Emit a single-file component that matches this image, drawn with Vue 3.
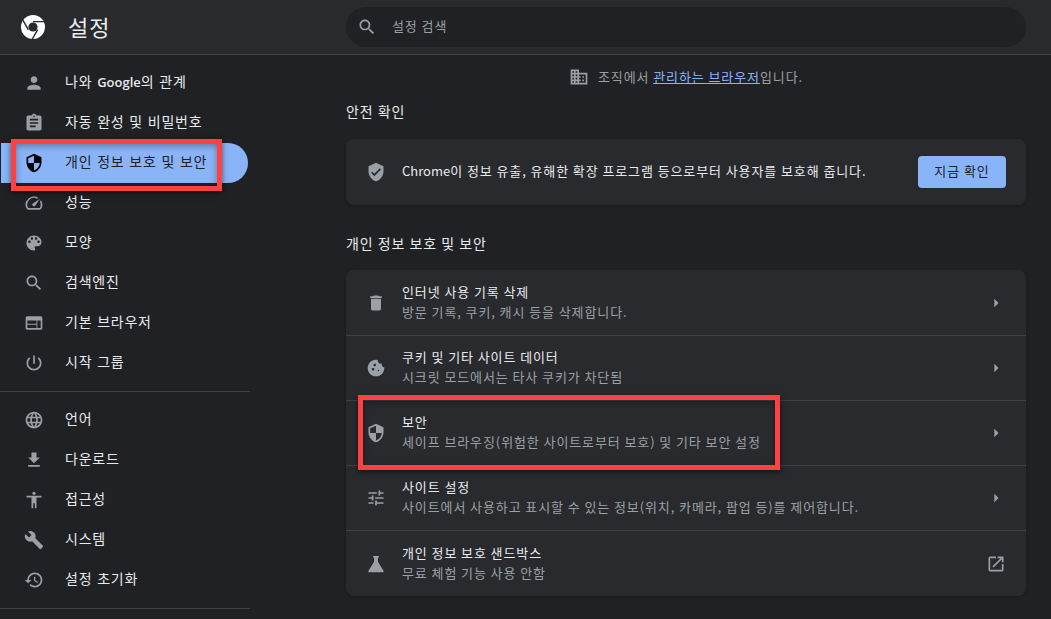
<template>
  <div class="page">
    <header class="topbar">
      <div class="brand">
        <svg class="logo" viewBox="0 0 24 24">
          <circle cx="12" cy="12" r="12" fill="#fff" />
          <circle cx="12" cy="12" r="4.6" fill="#292a2d" />
          <path d="M12 6.6H23.4M7.3 14.7L1.7 4.8M16.7 14.7l-5.6 9.7" stroke="#292a2d" stroke-width="1.4" fill="none" />
        </svg>
        <h1 class="brand-title">설정</h1>
      </div>
      <div class="search">
        <svg class="icon" viewBox="0 0 24 24"><path :d="icons.search" /></svg>
        <span class="search-text">설정 검색</span>
      </div>
    </header>

    <div class="body">
      <nav class="sidebar">
        <div v-for="(group, i) in navGroups" :key="i" class="nav-group">
          <a v-for="item in group" :key="item.label" class="nav-item" :class="{ active: item.active }">
            <svg class="icon" viewBox="0 0 24 24"><path :d="icons[item.icon]" /></svg>
            <span v-if="item.label === 'google'">나와 <b class="latin">Google</b>의 관계</span>
            <span v-else>{{ item.label }}</span>
          </a>
        </div>
      </nav>

      <main class="content">
        <div class="managed">
          <svg class="icon" viewBox="0 0 24 24"><path :d="icons.domain" /></svg>
          <span>조직에서 <a class="link">관리하는 브라우저</a>입니다.</span>
        </div>

        <h2 class="section-title first">안전 확인</h2>
        <section class="card check-card">
          <svg class="icon" viewBox="0 0 24 24"><path :d="icons.verified" /></svg>
          <span class="check-text"><span class="plain">Chrome</span>이 정보 유출, 유해한 확장 프로그램 등으로부터 사용자를 보호해 줍니다.</span>
          <button class="check-btn">지금 확인</button>
        </section>

        <h2 class="section-title">개인 정보 보호 및 보안</h2>
        <section class="card">
          <div v-for="row in rows" :key="row.title" class="row">
            <svg class="icon" viewBox="0 0 24 24"><path :d="icons[row.icon]" /></svg>
            <div class="row-text">
              <div class="row-title">{{ row.title }}</div>
              <div class="row-sub">{{ row.sub }}</div>
            </div>
            <svg v-if="row.external" class="icon trail" viewBox="0 0 24 24"><path :d="icons.external" /></svg>
            <svg v-else class="icon trail" viewBox="0 0 24 24"><path d="M10 7l5 5-5 5z" /></svg>
          </div>
        </section>
      </main>
    </div>

    <div class="callout callout-nav"></div>
    <div class="callout callout-row"></div>
  </div>
</template>

<script setup>
const icons = {
  person: 'M12 12c2.21 0 4-1.79 4-4s-1.79-4-4-4-4 1.79-4 4 1.79 4 4 4zm0 2c-2.67 0-8 1.34-8 4v2h16v-2c0-2.66-5.33-4-8-4z',
  assignment: 'M19 3h-4.18C14.4 1.84 13.3 1 12 1c-1.3 0-2.4.84-2.82 2H5c-1.1 0-2 .9-2 2v14c0 1.1.9 2 2 2h14c1.1 0 2-.9 2-2V5c0-1.1-.9-2-2-2zm-7 0c.55 0 1 .45 1 1s-.45 1-1 1-1-.45-1-1 .45-1 1-1zm2 14H7v-2h7v2zm3-4H7v-2h10v2zm0-4H7V7h10v2z',
  shield: 'M12 1L3 5v6c0 5.55 3.84 10.74 9 12 5.16-1.26 9-6.45 9-12V5l-9-4zm0 10.99h7c-.53 4.12-3.28 7.79-7 8.94V12H5V6.3l7-3.11v8.8z',
  speed: 'M20.38 8.57l-1.23 1.85a8 8 0 0 1-.22 7.58H5.07A8 8 0 0 1 15.58 6.85l1.85-1.23A10 10 0 0 0 3.35 19a2 2 0 0 0 1.72 1h13.85a2 2 0 0 0 1.74-1 10 10 0 0 0-.27-10.44zm-9.79 6.84a2 2 0 0 0 2.83 0l5.66-8.49-8.49 5.66a2 2 0 0 0 0 2.83z',
  palette: 'M12 3c-4.97 0-9 4.03-9 9s4.03 9 9 9c.83 0 1.5-.67 1.5-1.5 0-.39-.15-.74-.39-1.01-.23-.26-.38-.61-.38-.99 0-.83.67-1.5 1.5-1.5H16c2.76 0 5-2.24 5-5 0-4.42-4.03-8-9-8zm-5.5 9c-.83 0-1.5-.67-1.5-1.5S5.67 9 6.5 9 8 9.67 8 10.5 7.33 12 6.5 12zm3-4C8.67 8 8 7.33 8 6.5S8.67 5 9.5 5s1.5.67 1.5 1.5S10.33 8 9.5 8zm5 0c-.83 0-1.5-.67-1.5-1.5S13.67 5 14.5 5s1.5.67 1.5 1.5S15.33 8 14.5 8zm3 4c-.83 0-1.5-.67-1.5-1.5S16.67 9 17.5 9s1.5.67 1.5 1.5-.67 1.5-1.5 1.5z',
  search: 'M15.5 14h-.79l-.28-.27C15.41 12.59 16 11.11 16 9.5 16 5.91 13.09 3 9.5 3S3 5.91 3 9.5 5.91 16 9.5 16c1.61 0 3.09-.59 4.23-1.57l.27.28v.79l5 4.99L20.49 19l-4.99-5zm-6 0C7.01 14 5 11.99 5 9.5S7.01 5 9.5 5 14 7.01 14 9.5 11.99 14 9.5 14z',
  web: 'M20 4H4c-1.1 0-1.99.9-1.99 2L2 18c0 1.1.9 2 2 2h16c1.1 0 2-.9 2-2V6c0-1.1-.9-2-2-2zm-5 14H4v-4h11v4zm0-5H4V9h11v4zm5 5h-4V9h4v9z',
  power: 'M13 3h-2v10h2V3zm4.83 2.17l-1.42 1.42C17.99 7.86 19 9.81 19 12c0 3.87-3.13 7-7 7s-7-3.13-7-7c0-2.19 1.01-4.14 2.58-5.42L6.17 5.17C4.23 6.82 3 9.26 3 12c0 4.97 4.03 9 9 9s9-4.03 9-9c0-2.74-1.23-5.18-3.17-6.83z',
  language: 'M11.99 2C6.47 2 2 6.48 2 12s4.47 10 9.99 10C17.52 22 22 17.52 22 12S17.52 2 11.99 2zm6.93 6h-2.95c-.32-1.25-.78-2.45-1.38-3.56 1.84.63 3.37 1.91 4.33 3.56zM12 4.04c.83 1.2 1.48 2.53 1.91 3.96h-3.82c.43-1.43 1.08-2.76 1.91-3.96zM4.26 14C4.1 13.36 4 12.69 4 12s.1-1.36.26-2h3.38c-.08.66-.14 1.32-.14 2 0 .68.06 1.34.14 2H4.26zm.82 2h2.95c.32 1.25.78 2.45 1.38 3.56-1.84-.63-3.37-1.9-4.33-3.56zm2.95-8H5.08c.96-1.66 2.49-2.93 4.33-3.56C8.81 5.55 8.35 6.75 8.03 8zM12 19.96c-.83-1.2-1.48-2.53-1.91-3.96h3.82c-.43 1.43-1.08 2.76-1.91 3.96zM14.34 14H9.66c-.09-.66-.16-1.32-.16-2 0-.68.07-1.35.16-2h4.68c.09.65.16 1.32.16 2 0 .68-.07 1.34-.16 2zm.25 5.56c.6-1.11 1.06-2.31 1.38-3.56h2.95c-.96 1.65-2.49 2.93-4.33 3.56zM16.36 14c.08-.66.14-1.32.14-2 0-.68-.06-1.34-.14-2h3.38c.16.64.26 1.31.26 2s-.1 1.36-.26 2h-3.38z',
  download: 'M19 9h-4V3H9v6H5l7 7 7-7zM5 18v2h14v-2H5z',
  accessibility: 'M12 2c1.1 0 2 .9 2 2s-.9 2-2 2-2-.9-2-2 .9-2 2-2zm9 7h-6v13h-2v-6h-2v6H9V9H3V7h18v2z',
  build: 'M22.7 19l-9.1-9.1c.9-2.3.4-5-1.5-6.9-2-2-5-2.4-7.4-1.3L9 6 6 9 1.6 4.7C.4 7.1.9 10.1 2.9 12.1c1.9 1.9 4.6 2.4 6.9 1.5l9.1 9.1c.4.4 1 .4 1.4 0l2.3-2.3c.5-.4.5-1.1.1-1.4z',
  restore: 'M13 3c-4.97 0-9 4.03-9 9H1l3.89 3.89.07.14L9 12H6c0-3.87 3.13-7 7-7s7 3.13 7 7-3.13 7-7 7c-1.93 0-3.68-.79-4.94-2.06l-1.42 1.42C8.27 19.99 10.51 21 13 21c4.97 0 9-4.03 9-9s-4.03-9-9-9zm-1 5v5l4.28 2.54.72-1.21-3.5-2.08V8H12z',
  domain: 'M12 7V3H2v18h20V7H12zM6 19H4v-2h2v2zm0-4H4v-2h2v2zm0-4H4V9h2v2zm0-4H4V5h2v2zm4 12H8v-2h2v2zm0-4H8v-2h2v2zm0-4H8V9h2v2zm0-4H8V5h2v2zm10 12h-8v-2h2v-2h-2v-2h2v-2h-2V9h8v10zm-2-8h-2v2h2v-2zm0 4h-2v2h2v-2z',
  verified: 'M12 1L3 5v6c0 5.55 3.84 10.74 9 12 5.16-1.26 9-6.45 9-12V5l-9-4zm-2 16l-4-4 1.41-1.41L10 14.17l6.59-6.59L18 9l-8 8z',
  trash: 'M6 19c0 1.1.9 2 2 2h8c1.1 0 2-.9 2-2V7H6v12zM19 4h-3.5l-1-1h-5l-1 1H5v2h14V4z',
  cookie: 'M21.95 10.99c-1.79-.03-3.7-1.95-2.68-4.22-2.97 1-5.78-1.59-5.19-4.56C7.11.74 2 6.41 2 12c0 5.52 4.48 10 10 10 5.89 0 10.54-5.08 9.95-11.01zM8.5 15c-.83 0-1.5-.67-1.5-1.5S7.67 12 8.5 12s1.5.67 1.5 1.5S9.33 15 8.5 15zm2-5C9.67 10 9 9.33 9 8.5S9.67 7 10.5 7s1.5.67 1.5 1.5-.67 1.5-1.5 1.5zm4.5 6c-.55 0-1-.45-1-1s.45-1 1-1 1 .45 1 1-.45 1-1 1z',
  tune: 'M3 17v2h6v-2H3zM3 5v2h10V5H3zm10 16v-2h8v-2h-8v-2h-2v6h2zM7 9v2H3v2h4v2h2V9H7zm14 4v-2H11v2h10zm-6-4h2V7h4V5h-4V3h-2v6z',
  flask: 'M8.5 2.5h7v1.7h-1.2v5L21 20c.6 1-.1 2-1.2 2H4.2c-1.1 0-1.8-1-1.2-2L9.7 9.2v-5H8.5z',
  external: 'M19 19H5V5h7V3H5c-1.11 0-2 .9-2 2v14c0 1.1.89 2 2 2h14c1.1 0 2-.9 2-2v-7h-2v7zM14 3v2h3.59l-9.83 9.83 1.41 1.41L19 6.41V10h2V3h-7z'
}

const navGroups = [
  [
    { label: 'google', icon: 'person' },
    { label: '자동 완성 및 비밀번호', icon: 'assignment' },
    { label: '개인 정보 보호 및 보안', icon: 'shield', active: true },
    { label: '성능', icon: 'speed' },
    { label: '모양', icon: 'palette' },
    { label: '검색엔진', icon: 'search' },
    { label: '기본 브라우저', icon: 'web' },
    { label: '시작 그룹', icon: 'power' }
  ],
  [
    { label: '언어', icon: 'language' },
    { label: '다운로드', icon: 'download' },
    { label: '접근성', icon: 'accessibility' },
    { label: '시스템', icon: 'build' },
    { label: '설정 초기화', icon: 'restore' }
  ]
]

const rows = [
  { title: '인터넷 사용 기록 삭제', sub: '방문 기록, 쿠키, 캐시 등을 삭제합니다.', icon: 'trash' },
  { title: '쿠키 및 기타 사이트 데이터', sub: '시크릿 모드에서는 타사 쿠키가 차단됨', icon: 'cookie' },
  { title: '보안', sub: '세이프 브라우징(위험한 사이트로부터 보호) 및 기타 보안 설정', icon: 'shield' },
  { title: '사이트 설정', sub: '사이트에서 사용하고 표시할 수 있는 정보(위치, 카메라, 팝업 등)를 제어합니다.', icon: 'tune' },
  { title: '개인 정보 보호 샌드박스', sub: '무료 체험 기능 사용 안함', icon: 'flask', external: true }
]
</script>

<style scoped>
.page {
  position: relative;
  width: 1051px;
  height: 619px;
  overflow: hidden;
  background: #202124;
  color: #e8eaed;
  font-family: "Noto Sans CJK KR", "Noto Sans", sans-serif;
  font-size: 13px;
  line-height: 20px;
  letter-spacing: 0.9px;
}

.icon {
  width: 20px;
  height: 20px;
  flex: none;
  fill: #9aa0a6;
}

.topbar {
  display: flex;
  align-items: center;
  height: 54px;
  background: #292a2d;
  border-bottom: 1px solid #3f4042;
}

.brand {
  display: flex;
  align-items: center;
  width: 346px;
  padding-left: 21px;
  box-sizing: border-box;
}

.logo {
  width: 24px;
  height: 24px;
}

.brand-title {
  margin: 0 0 2px 23px;
  font-size: 22px;
  font-weight: 400;
  letter-spacing: 1px;
}

.search {
  display: flex;
  align-items: center;
  width: 680px;
  height: 40px;
  padding-left: 11px;
  box-sizing: border-box;
  border-radius: 20px;
  background: #202124;
  color: #9aa0a6;
}

.search-text {
  margin-left: 15px;
  padding-bottom: 2px;
}

.body {
  display: flex;
}

.sidebar {
  width: 250px;
  flex: none;
  padding-top: 8px;
}

.nav-group {
  padding-bottom: 8px;
  margin-bottom: 8px;
  border-bottom: 1px solid #3f4042;
}

.nav-item {
  display: flex;
  align-items: center;
  height: 40px;
  width: 247px;
  margin-left: 1px;
  padding-left: 23px;
  box-sizing: border-box;
  border-radius: 0 20px 20px 0;
  font-size: 14px;
  letter-spacing: 0.75px;
  word-spacing: 1px;
}

.nav-item > span {
  margin-left: 21px;
  padding-bottom: 4px;
}

.nav-item.active {
  background: #8ab4f8;
  color: #202124;
}

.nav-item.active .icon {
  fill: #000;
}

.latin {
  font-family: "Open Sans", sans-serif;
  font-size: 13px;
  font-weight: 600;
  letter-spacing: 0;
}

.plain {
  letter-spacing: 0;
}

.content {
  width: 680px;
  margin-left: 96px;
}

.managed {
  display: flex;
  align-items: center;
  justify-content: center;
  gap: 9px;
  height: 44px;
  color: #9aa0a6;
}

.link {
  color: #8ab4f8;
  text-decoration: underline;
}

.section-title {
  margin: 28px 0 17px;
  font-size: 14px;
  font-weight: 400;
  line-height: 20px;
  letter-spacing: 0.95px;
}

.section-title.first {
  margin-top: 2px;
  margin-bottom: 18px;
}

.card {
  background: #292a2d;
  border-radius: 8px;
  box-shadow: 0 1px 3px rgba(0, 0, 0, 0.25);
}

.check-card {
  display: flex;
  align-items: center;
  height: 66px;
  padding: 0 20px;
  box-sizing: border-box;
}

.check-text {
  flex: 1;
  margin-left: 16px;
  padding-bottom: 2px;
}

.check-btn {
  width: 88px;
  height: 32px;
  padding: 0 0 2px;
  border: none;
  border-radius: 4px;
  background: #8ab4f8;
  color: #202124;
  font: inherit;
  letter-spacing: inherit;
}

.row {
  display: flex;
  align-items: center;
  height: 65px;
  padding: 0 20px;
  box-sizing: border-box;
  border-top: 1px solid #3f4042;
}

.row:first-child {
  border-top: none;
}

.row:last-child {
  height: 66px;
}

.row-text {
  flex: 1;
  margin-left: 16px;
  padding-bottom: 2px;
}

.row-sub {
  color: #9aa0a6;
}

.callout {
  position: absolute;
  border: 5px solid #fb4141;
  box-sizing: border-box;
  box-shadow: 0 2px 6px rgba(0, 0, 0, 0.55), inset 0 2px 6px rgba(0, 0, 0, 0.35);
}

.callout-nav {
  left: 11px;
  top: 139px;
  width: 211px;
  height: 52px;
}

.callout-row {
  left: 358px;
  top: 395px;
  width: 422px;
  height: 75px;
}
</style>

<style>
body {
  background: #202124;
}
</style>
